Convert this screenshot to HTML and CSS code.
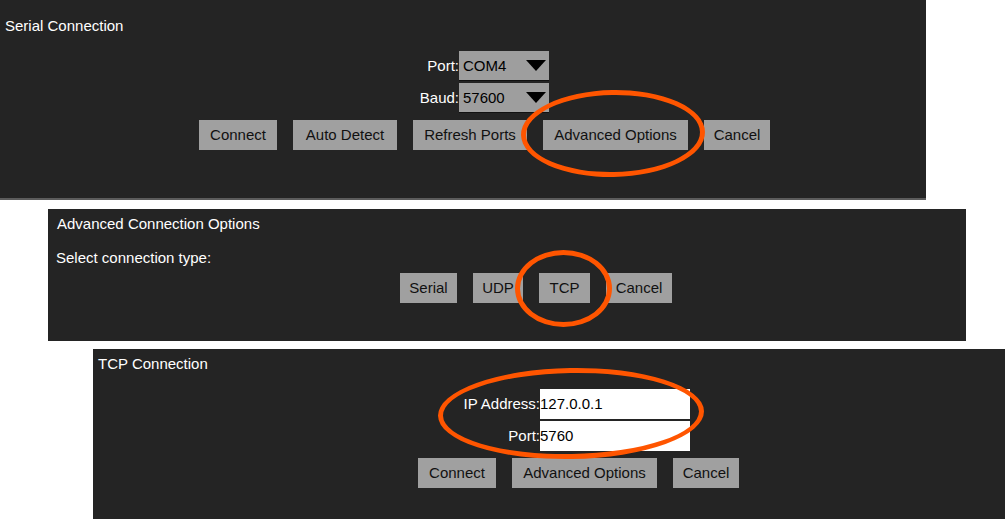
FILE: index.html
```html
<!doctype html>
<html lang="en">
    <head>
        <meta charset="UTF-8" />
        <meta name="viewport" content="width=device-width, initial-scale=1" />
        <link rel="stylesheet" href="styles.css">
        <title>Connection dialogs</title>
    </head>
    <body>
        <!-- Serial dialog -->
        <section class="panel panel-serial">
            <div class="panel-title">Serial Connection</div>
            <div class="fields fields-serial">
                <span class="field-label">Port:</span>
                <div class="select"><span>COM4</span><i class="caret"></i></div>
                <span class="field-label">Baud:</span>
                <div class="select"><span>57600</span><i class="caret"></i></div>
            </div>
            <div class="actions actions-serial">
                <button class="btn">Connect</button>
                <button class="btn">Auto Detect</button>
                <button class="btn">Refresh Ports</button>
                <button class="btn">Advanced Options</button>
                <button class="btn">Cancel</button>
            </div>
            <div class="mark mark-serial"></div>
        </section>

        <!-- Connection type picker -->
        <section class="panel panel-advanced">
            <div class="panel-title">Advanced Connection Options</div>
            <div class="prompt">Select connection type:</div>
            <div class="actions actions-advanced">
                <button class="btn">Serial</button>
                <button class="btn">UDP</button>
                <button class="btn">TCP</button>
                <button class="btn">Cancel</button>
            </div>
            <div class="mark mark-advanced"></div>
        </section>

        <!-- TCP dialog -->
        <section class="panel panel-tcp">
            <div class="panel-title">TCP Connection</div>
            <div class="fields fields-tcp">
                <span class="field-label">IP Address:</span>
                <div class="input">127.0.0.1</div>
                <span class="field-label">Port:</span>
                <div class="input">5760</div>
            </div>
            <div class="actions actions-tcp">
                <button class="btn">Connect</button>
                <button class="btn">Advanced Options</button>
                <button class="btn">Cancel</button>
            </div>
            <div class="mark mark-tcp"></div>
        </section>
    </body>
</html>
```

FILE: styles.css
```css
html,
body {
    margin: 0;
    padding: 0;
}
body {
    background: #ffffff;
    font-family: "Liberation Sans", Arial, sans-serif;
    font-size: 15px;
    line-height: 18px;
    color: #ffffff;
    overflow: hidden;
    height: 519px;
}

/* -- PANELS -- */

.panel {
    position: relative;
    box-sizing: border-box;
    background: #242424;
}
.panel-serial {
    width: 926px;
    height: 200px;
    padding: 17px 0 0 5px;
    border-bottom: 2px solid #5c5c5c;
}
.panel-advanced {
    width: 918px;
    height: 132px;
    margin: 9px 0 0 48px;
    padding: 6px 0 0 9px;
}
.panel-tcp {
    width: 912px;
    height: 170px;
    margin: 8px 0 0 93px;
    padding: 6px 0 0 5px;
}
.prompt {
    margin: 16px 0 0 -1px;
}

/* -- FIELDS -- */

.fields {
    display: grid;
    row-gap: 2px;
    margin-top: 16px;
}
.fields-serial {
    grid-template-columns: 60px 90px;
    margin-left: 394px;
}
.fields-tcp {
    grid-template-columns: 90px 150px;
    margin-left: 352px;
}
.field-label {
    display: flex;
    align-items: center;
    justify-content: flex-end;
}
.select {
    display: flex;
    align-items: center;
    justify-content: space-between;
    height: 29px;
    padding: 0 3px 0 4px;
    background: #9e9e9e;
    border-bottom: 1px solid #111111;
    color: #000000;
}
.caret {
    width: 0;
    height: 0;
    border-left: 10px solid transparent;
    border-right: 10px solid transparent;
    border-top: 11px solid #000000;
}
.input {
    display: flex;
    align-items: center;
    height: 30px;
    background: #ffffff;
    color: #000000;
}

/* -- BUTTONS -- */

.actions {
    display: grid;
    column-gap: 16px;
    justify-content: start;
}
.actions-serial {
    grid-template-columns: 78px 104px 114px 145px 66px;
    margin: 7px 0 0 194px;
}
.actions-advanced {
    grid-template-columns: 57px 50px 51px 66px;
    margin: 6px 0 0 343px;
}
.actions-tcp {
    grid-template-columns: 78px 145px 66px;
    margin: 7px 0 0 320px;
}
.btn {
    height: 30px;
    padding: 0;
    border: none;
    background: #a0a0a0;
    color: #111111;
    font: inherit;
    text-align: center;
}

/* -- ANNOTATIONS -- */

.mark {
    position: absolute;
    box-sizing: border-box;
    border: 5px solid #ff5500;
    border-radius: 50%;
}
.mark-serial {
    left: 521px;
    top: 90px;
    width: 184px;
    height: 87px;
    transform: rotate(-1deg);
}
.mark-advanced {
    left: 467px;
    top: 41px;
    width: 97px;
    height: 77px;
}
.mark-tcp {
    left: 345px;
    top: 19px;
    width: 266px;
    height: 91px;
    transform: rotate(-1deg);
}
```
